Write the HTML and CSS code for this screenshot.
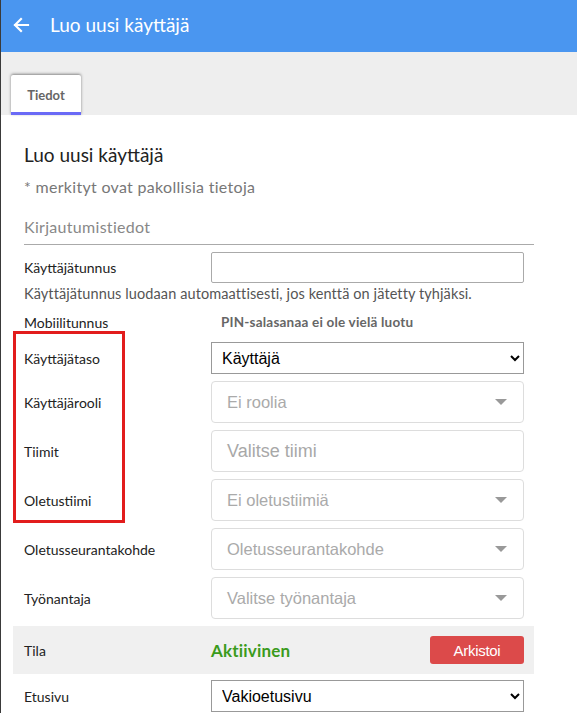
FILE: index.html
```html
<!DOCTYPE html>
<html lang="fi">
<head>
<meta charset="utf-8">
<title>Luo uusi käyttäjä</title>
<link rel="stylesheet" href="styles.css">
</head>
<body>
<div class="app">
  <header class="topbar">
    <svg class="back" width="18" height="18" viewBox="0 0 18 18" aria-hidden="true">
      <path d="M16 9H3M9 3L3 9l6 6" fill="none" stroke="#fff" stroke-width="2.2" stroke-linecap="square"/>
    </svg>
    <h1 class="topbar-title">Luo uusi käyttäjä</h1>
  </header>
  <nav class="tabs">
    <div class="tab">Tiedot</div>
  </nav>
  <main class="content">
    <h2 class="page-title">Luo uusi käyttäjä</h2>
    <p class="note">* merkityt ovat pakollisia tietoja</p>
    <h3 class="section">Kirjautumistiedot</h3>

    <div class="row row-user">
      <label class="label">Käyttäjätunnus</label>
      <input class="text-input" type="text">
    </div>
    <p class="help">Käyttäjätunnus luodaan automaattisesti, jos kenttä on jätetty tyhjäksi.</p>

    <div class="row row-mobile">
      <span class="label">Mobiilitunnus</span>
      <span class="pin">PIN-salasanaa ei ole vielä luotu</span>
    </div>

    <div class="row row-level">
      <span class="label">Käyttäjätaso</span>
      <select class="native"><option>Käyttäjä</option></select>
    </div>
    <div class="row row-rs">
      <span class="label">Käyttäjärooli</span>
      <div class="rs"><span class="ph">Ei roolia</span><span class="caret"></span></div>
    </div>
    <div class="row row-rs">
      <span class="label">Tiimit</span>
      <div class="rs"><span class="ph ph-big">Valitse tiimi</span></div>
    </div>
    <div class="row row-rs">
      <span class="label">Oletustiimi</span>
      <div class="rs"><span class="ph">Ei oletustiimiä</span><span class="caret"></span></div>
    </div>
    <div class="row row-rs">
      <span class="label">Oletusseurantakohde</span>
      <div class="rs"><span class="ph">Oletusseurantakohde</span><span class="caret"></span></div>
    </div>
    <div class="row row-rs">
      <span class="label">Työnantaja</span>
      <div class="rs"><span class="ph">Valitse työnantaja</span><span class="caret"></span></div>
    </div>

    <div class="row row-status">
      <span class="label">Tila</span>
      <div class="status">
        <span class="active">Aktiivinen</span>
        <button class="archive" type="button">Arkistoi</button>
      </div>
    </div>

    <div class="row row-home">
      <span class="label">Etusivu</span>
      <select class="native"><option>Vakioetusivu</option></select>
    </div>

    <div class="highlight" aria-hidden="true"></div>
  </main>
</div>
</body>
</html>
```
FILE: styles.css
```css
* { box-sizing: border-box; }
html, body { margin: 0; padding: 0; }
body {
  font-family: "Lato", "Noto Sans", sans-serif;
  color: #222;
  background: #fff;
  overflow: hidden;
}
.app {
  border-left: 1px solid #3a3a3a;
  min-height: 100vh;
}
.topbar {
  height: 52px;
  background: #4a96f0;
  display: flex;
  align-items: center;
  padding-left: 11px;
}
.back { display: block; margin-top: -2px; }
.topbar-title {
  margin: 0 0 0 20px;
  color: #fff;
  font-size: 19px;
  font-weight: 400;
  line-height: 24px;
  margin-top: -2px;
}
.tabs {
  background: #eeeeee;
  height: 63px;
  padding: 23px 0 0 10px;
}
.tab {
  width: 70px;
  height: 40px;
  background: #fff;
  box-shadow: 0 -1px 3px rgba(0,0,0,0.45);
  border-bottom: 3px solid #6a6af6;
  border-radius: 2px 2px 0 0;
  color: #666;
  font-weight: 700;
  font-size: 13px;
  display: flex;
  align-items: center;
  justify-content: center;
  padding-top: 2px;
}
.content {
  position: relative;
  margin-left: 12px;
  width: 521px;
  padding-top: 28px;
}
.page-title {
  margin: 0 0 0 11px;
  font-size: 19px;
  font-weight: 400;
  line-height: 24px;
  color: #222;
}
.note {
  margin: 10px 0 0 11px;
  font-size: 16px;
  letter-spacing: 0.3px;
  line-height: 20px;
  color: #777;
}
.section {
  margin: 20px 0 0 11px;
  font-size: 16px;
  letter-spacing: 0.3px;
  font-weight: 400;
  line-height: 20px;
  color: #888;
  padding-bottom: 7px;
  border-bottom: 1px solid #aaa;
}
.row {
  display: grid;
  grid-template-columns: 187px 1fr;
  align-items: center;
  padding: 0 10px 0 11px;
}
.label { font-size: 14px; color: #222; }
.row-user { margin-top: 7px; }
.text-input {
  height: 31px;
  border: 1px solid #aaa;
  border-radius: 2px;
  margin: 0;
  font: 16px "Liberation Sans", Arial, sans-serif;
}
.help {
  margin: 2px 0 0 11px;
  font-size: 14.5px;
  letter-spacing: 0.1px;
  line-height: 18px;
  color: #555;
}
.row-mobile { margin-top: 10px; height: 18px; }
.pin {
  font-size: 13.5px;
  letter-spacing: 0.2px;
  font-weight: 700;
  color: #666;
  padding-left: 10px;
}
.row-level { margin-top: 11px; }
.native {
  height: 32px;
  border: 1px solid #999;
  border-radius: 0;
  background: #fff;
  font: 16px "Liberation Sans", Arial, sans-serif;
  color: #000;
  padding: 0 6px;
  margin: 0;
  width: 100%;
}
.row-rs { margin-top: 7px; }
.rs {
  height: 42px;
  border: 1px solid #ddd;
  border-radius: 4px;
  display: flex;
  align-items: center;
  justify-content: space-between;
  padding: 0 16px 0 15px;
}
.ph {
  font: 16.5px "Liberation Sans", Arial, sans-serif;
  color: #aaa;
}
.ph-big { font-size: 18px; color: #a8a8a8; }
.caret {
  width: 0;
  height: 0;
  border-left: 6px solid transparent;
  border-right: 6px solid transparent;
  border-top: 6px solid #999;
}
.row-status {
  margin-top: 7px;
  height: 48px;
  background: #f0f0f0;
}
.status {
  display: flex;
  align-items: center;
  justify-content: space-between;
}
.active {
  color: #3b9b1c;
  font-weight: 700;
  font-size: 17px;
  letter-spacing: 0.2px;
}
.archive {
  width: 94px;
  height: 28px;
  background: #dc4a4a;
  border: 0;
  border-radius: 3px;
  color: #fff;
  font: 15px "Liberation Sans", Arial, sans-serif;
  letter-spacing: -0.3px;
  margin: 0;
}
.row-home { margin-top: 6px; }
.highlight {
  position: absolute;
  left: 0;
  top: 216px;
  width: 112px;
  height: 192px;
  border: 3px solid #e21c1c;
}
```
